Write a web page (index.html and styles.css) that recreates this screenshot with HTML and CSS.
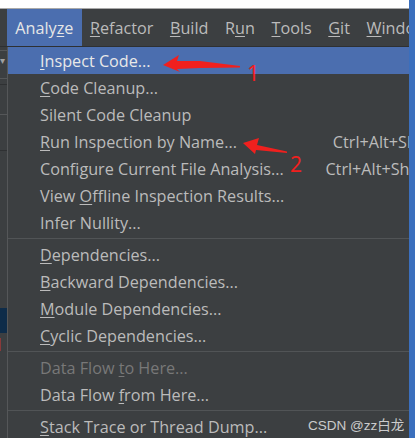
FILE: index.html
```html
<!DOCTYPE html>
<html>
<head>
<meta charset="utf-8">
<link rel="stylesheet" href="styles.css">
</head>
<body>
<div class="screen">
  <div class="main">
    <div class="topbar"></div>
    <div class="menubar">
      <div class="gutter"></div>
      <span class="mi active">Analy<u>z</u>e</span>
      <span class="mi"><u>R</u>efactor</span>
      <span class="mi"><u>B</u>uild</span>
      <span class="mi">R<u>u</u>n</span>
      <span class="mi"><u>T</u>ools</span>
      <span class="mi"><u>G</u>it</span>
      <span class="mi"><u>W</u>indow</span>
    </div>
    <div class="body">
      <div class="side">
        <div class="side-line l1"></div>
        <div class="side-chev">▾</div>
        <div class="side-line l2"></div>
        <div class="side-line l3"></div>
        <div class="side-line l4"></div>
        <div class="side-line l5"></div>
        <div class="side-sel"></div>
        <div class="side-red"></div>
      </div>
      <div class="popup">
        <div class="row hl"><span><u>I</u>nspect Code...</span></div>
        <div class="row"><span><u>C</u>ode Cleanup...</span></div>
        <div class="row"><span>Silent Code Cleanup</span></div>
        <div class="row"><span><u>R</u>un Inspection by Name...</span><span class="key">Ctrl+Alt+Shift+I</span></div>
        <div class="row"><span>Configure Current File Analysis...</span><span class="key">Ctrl+Alt+Shift+H</span></div>
        <div class="row"><span>View <u>O</u>ffline Inspection Results...</span></div>
        <div class="row"><span>Infer Nullity...</span></div>
        <div class="sep"></div>
        <div class="row"><span><u>D</u>ependencies...</span></div>
        <div class="row"><span><u>B</u>ackward Dependencies...</span></div>
        <div class="row"><span><u>M</u>odule Dependencies...</span></div>
        <div class="row"><span><u>C</u>yclic Dependencies...</span></div>
        <div class="sep"></div>
        <div class="row dis"><span>Data Flow <u>t</u>o Here...</span></div>
        <div class="row"><span>Data Flow <u>f</u>rom Here...</span></div>
        <div class="sep"></div>
        <div class="row"><span><u>S</u>tack Trace or Thread Dump...</span></div>
      </div>
    </div>
  </div>
  <div class="edge"></div>

  <svg class="marks" width="415" height="438" viewBox="0 0 415 438">
    <polygon fill="#f0201e" points="163,65 179,55 177,61 200,61 240,66 240,67.4 200,68 177,69 180,72"/>
    <polygon fill="#f0201e" points="243,143 259,138 257,145 287,151.5 287,153 256,150 255,154"/>
  </svg>
  <span class="label one">1</span>
  <span class="label two">2</span>
  <span class="watermark">CSDN @zz白龙</span>
</div>
</body>
</html>
```
FILE: styles.css
```css
html, body {
  margin: 0;
  padding: 0;
}
body {
  width: 415px;
  height: 438px;
  overflow: hidden;
  background: #3c3f41;
  font-family: "Open Sans", "Noto Sans", sans-serif;
}
.screen {
  position: relative;
  display: grid;
  grid-template-columns: 409px 6px;
  width: 415px;
  height: 438px;
  overflow: hidden;
}
.main {
  display: flex;
  flex-direction: column;
  min-width: 0;
  overflow: hidden;
}
.edge {
  background: #3b6fbd;
}
.topbar {
  height: 8px;
  background: #ffffff;
  border-bottom: 1px solid #a9a9a9;
  flex: none;
}
.menubar {
  display: flex;
  height: 37px;
  flex: none;
  background: #3c3f41;
  border-bottom: 1px solid #2e3032;
  white-space: nowrap;
  overflow: hidden;
}
.gutter {
  width: 7px;
  flex: none;
}
.mi {
  display: flex;
  align-items: center;
  padding: 0 8.3px;
  color: #bbbbbb;
  font-size: 16.2px;
  flex: none;
}
.mi.active {
  background: #4b6eaf;
  color: #e6e6e6;
}
u {
  text-decoration-thickness: 1px;
  text-underline-offset: 2px;
}
.body {
  display: flex;
  flex: 1;
  min-height: 0;
}
.side {
  width: 7px;
  flex: none;
  display: flex;
  flex-direction: column;
  background: #3c3f41;
}
.side-line {
  height: 1px;
  background: #555759;
}
.l1 { margin-top: 3px; }
.side-chev {
  height: 12px;
  margin-top: 3px;
  font-size: 10px;
  line-height: 12px;
  color: #a0a0a0;
  overflow: hidden;
}
.l2 { margin-top: 12px; }
.l3 { margin-top: 5px; background: #2f3133; }
.l4 { margin-top: 29px; }
.l5 { margin-top: 35px; background: #2f3133; }
.side-sel {
  margin-top: 157px;
  height: 25px;
  background: #0e2c49;
}
.side-red {
  margin-top: 5px;
  width: 1px;
  height: 13px;
  background: #8a3a3a;
}
.popup {
  width: 470px;
  flex: none;
  border-left: 1px solid #555759;
  background: #3c3f41;
}
.row {
  height: 27px;
  display: flex;
  align-items: center;
  justify-content: space-between;
  padding: 0 32px 0 32px;
  color: #bbbbbb;
  font-size: 16.2px;
  white-space: nowrap;
}
.row.hl {
  background: #4b6eaf;
  color: #e8e8e8;
}
.row.dis {
  color: #787878;
}
.key {
  color: #bbbbbb;
}
.sep {
  height: 1px;
  margin: 2px 0;
  background: #515456;
}
.marks {
  position: absolute;
  left: 0;
  top: 0;
  pointer-events: none;
}
.label {
  position: absolute;
  color: #f0201e;
  font-family: "Noto Sans", sans-serif;
  font-size: 22px;
  line-height: 1;
}
.label.one {
  left: 247px;
  top: 61px;
}
.label.two {
  left: 290px;
  top: 154px;
  font-size: 21px;
}
.watermark {
  position: absolute;
  left: 308px;
  top: 414px;
  font-family: "Liberation Sans", "Noto Sans CJK SC", sans-serif;
  font-size: 13.5px;
  color: rgba(230, 230, 230, 0.85);
  white-space: nowrap;
}
```
